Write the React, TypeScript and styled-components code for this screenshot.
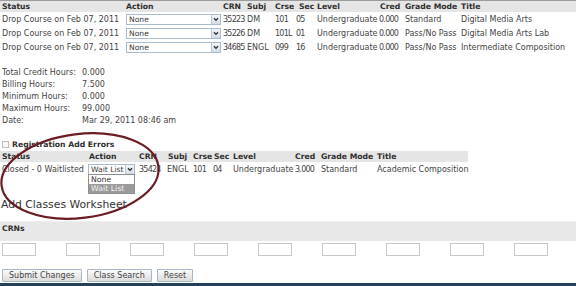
import React from "react";
import styled, { createGlobalStyle } from "styled-components";

const GlobalStyle = createGlobalStyle`
  html, body { margin: 0; padding: 0; background: #fff; }
  body {
    font-family: "DejaVu Sans", Verdana, sans-serif;
    font-size: 8px;
    color: #444;
  }
`;

const Page = styled.div`
  position: relative;
  width: 576px;
  height: 286px;
  overflow: hidden;
  display: flex;
  flex-direction: column;
`;

const COLS1 = "126px 97px 24px 28px 21px 21px 62px 26px 56px 115px";
const COLS2 = "88px 51px 28px 26px 20px 20px 62px 26px 56px 91px";

const HeaderRow = styled.div<{ $cols: string; $width: number; $rule?: boolean; $mt?: number }>`
  display: grid;
  grid-template-columns: ${(p) => p.$cols};
  width: ${(p) => p.$width}px;
  height: 11px;
  margin-top: ${(p) => p.$mt ?? 0}px;
  align-items: center;
  background: #e5e5e5;
  border-top: ${(p) => (p.$rule ? "1px solid #9c9c9c" : "none")};
  font-weight: bold;
  font-size: 7.7px;
  color: #2e2e2e;
`;

const DataRow = styled.div<{ $cols: string; $width: number }>`
  display: grid;
  grid-template-columns: ${(p) => p.$cols};
  width: ${(p) => p.$width}px;
  height: 14px;
  align-items: center;
`;

const Cell = styled.div<{ $pad?: number }>`
  white-space: nowrap;
  padding-left: ${(p) => p.$pad ?? 0}px;
  position: relative;
`;

const Num = styled.span`
  letter-spacing: -0.75px;
`;

const SelectBox = styled.div<{ $w: number }>`
  position: relative;
  box-sizing: border-box;
  width: ${(p) => p.$w}px;
  height: 11px;
  border: 1px solid #a8bccf;
  background: #fff;
  display: flex;
  align-items: center;
  padding-left: 2px;
  font-size: 7.6px;
  color: #3a3a3a;
`;

const SelectText = styled.span`
  flex: 1;
  white-space: nowrap;
`;

const ArrowBtn = styled.span`
  box-sizing: border-box;
  width: 9px;
  height: 9px;
  display: flex;
  align-items: center;
  justify-content: center;
  background: linear-gradient(#f1f4f7, #d5dce5);
  border-left: 1px solid #b9c6d3;
`;

const DropList = styled.div`
  position: absolute;
  left: -1px;
  top: 9px;
  box-sizing: border-box;
  width: 47px;
  border: 1px solid #8e8e8e;
  background: #fff;
  z-index: 2;
`;

const DropItem = styled.div<{ $active?: boolean }>`
  height: 9px;
  line-height: 9px;
  padding-left: 2px;
  font-size: 7.8px;
  background: ${(p) => (p.$active ? "#9b9b9b" : "#fff")};
  color: ${(p) => (p.$active ? "#f2f2f2" : "#333")};
`;

const Summary = styled.div`
  display: grid;
  grid-template-columns: 80px auto;
  grid-auto-rows: 12px;
  align-items: center;
  padding-left: 2px;
  margin-top: 12px;
`;

const CheckRow = styled.div`
  display: flex;
  align-items: center;
  height: 12px;
  margin-top: 12px;
  padding-left: 2px;
  gap: 3px;
`;

const CheckBox = styled.span`
  box-sizing: border-box;
  width: 7px;
  height: 7px;
  border: 1px solid #bdbdbd;
  background: #f8f8f8;
`;

const CheckLabel = styled.span`
  font-weight: bold;
  font-size: 7.7px;
  color: #2e2e2e;
`;

const Heading = styled.div`
  font-size: 10.8px;
  line-height: 13px;
  height: 13px;
  color: #333;
  padding-left: 1px;
  margin-top: 22px;
`;

const Band = styled.div`
  margin-top: 10px;
  border-top: 1px solid #efefef;
  height: 19px;
  box-sizing: content-box;
  background: #e8e8e8;
  font-weight: bold;
  font-size: 7.7px;
  color: #2e2e2e;
  padding-left: 2px;
  line-height: 14px;
`;

const InputRow = styled.div`
  display: flex;
  gap: 30px;
  padding-left: 2px;
  margin-top: 2px;
  height: 13px;
`;

const CrnInput = styled.input`
  box-sizing: border-box;
  width: 34px;
  height: 13px;
  padding: 0;
  margin: 0;
  border: 1px solid #c9c9c9;
  background: #fff;
`;

const ButtonRow = styled.div`
  display: flex;
  gap: 5px;
  padding-left: 2px;
  margin-top: 13px;
  height: 13px;
`;

const Button = styled.button`
  box-sizing: border-box;
  height: 13px;
  padding: 0 6px;
  margin: 0;
  font-family: "DejaVu Sans", Verdana, sans-serif;
  font-size: 8px;
  line-height: 11px;
  color: #444;
  border: 1px solid #a7b7c7;
  border-radius: 1px;
  background: linear-gradient(#fbfbfb, #dcdcdc);
`;

const BottomBar = styled.div`
  margin-top: 1px;
  height: 3px;
  background: #23415a;
`;

const Circle = styled.svg`
  position: absolute;
  left: 0;
  top: 0;
  pointer-events: none;
  z-index: 3;
`;

const Chevron = () => (
  <svg width="6" height="5" viewBox="0 0 6 5">
    <path d="M1 1.2 L3 3.4 L5 1.2" fill="none" stroke="#2b2b2b" strokeWidth="1.3" />
  </svg>
);

const FakeSelect: React.FC<{ w: number; value: string; children?: React.ReactNode }> = ({ w, value, children }) => (
  <SelectBox $w={w}>
    <SelectText>{value}</SelectText>
    <ArrowBtn>
      <Chevron />
    </ArrowBtn>
    {children}
  </SelectBox>
);

const dropped = [
  { crn: "35223", subj: "DM", crse: "101", sec: "05", mode: "Standard", title: "Digital Media Arts" },
  { crn: "35226", subj: "DM", crse: "101L", sec: "01", mode: "Pass/No Pass", title: "Digital Media Arts Lab" },
  { crn: "34685", subj: "ENGL", crse: "099", sec: "16", mode: "Pass/No Pass", title: "Intermediate Composition" },
];

const summary = [
  ["Total Credit Hours:", "0.000"],
  ["Billing Hours:", "7.500"],
  ["Minimum Hours:", "0.000"],
  ["Maximum Hours:", "99.000"],
  ["Date:", "Mar 29, 2011 08:46 am"],
];

export default function App() {
  return (
    <>
      <GlobalStyle />
      <Page>
        <HeaderRow $cols={COLS1} $width={576} $rule>
          <Cell $pad={2}>Status</Cell>
          <Cell>Action</Cell>
          <Cell>CRN</Cell>
          <Cell>Subj</Cell>
          <Cell>Crse</Cell>
          <Cell $pad={3}>Sec</Cell>
          <Cell>Level</Cell>
          <Cell $pad={1}>Cred</Cell>
          <Cell>Grade Mode</Cell>
          <Cell>Title</Cell>
        </HeaderRow>
        {dropped.map((r) => (
          <DataRow key={r.crn} $cols={COLS1} $width={576}>
            <Cell $pad={2}>Drop Course on Feb 07, 2011</Cell>
            <Cell>
              <FakeSelect w={95} value="None" />
            </Cell>
            <Cell><Num>{r.crn}</Num></Cell>
            <Cell>{r.subj}</Cell>
            <Cell><Num>{r.crse}</Num></Cell>
            <Cell><Num>{r.sec}</Num></Cell>
            <Cell>Undergraduate</Cell>
            <Cell><Num>0.000</Num></Cell>
            <Cell>{r.mode}</Cell>
            <Cell>{r.title}</Cell>
          </DataRow>
        ))}

        <Summary>
          {summary.map(([k, v]) => (
            <React.Fragment key={k}>
              <span>{k}</span>
              <span>{v}</span>
            </React.Fragment>
          ))}
        </Summary>

        <CheckRow>
          <CheckBox />
          <CheckLabel>Registration Add Errors</CheckLabel>
        </CheckRow>

        <HeaderRow $cols={COLS2} $width={468} $mt={1}>
          <Cell $pad={2}>Status</Cell>
          <Cell $pad={1}>Action</Cell>
          <Cell>CRN</Cell>
          <Cell $pad={1}>Subj</Cell>
          <Cell>Crse</Cell>
          <Cell $pad={1}>Sec</Cell>
          <Cell>Level</Cell>
          <Cell>Cred</Cell>
          <Cell>Grade Mode</Cell>
          <Cell>Title</Cell>
        </HeaderRow>
        <DataRow $cols={COLS2} $width={468}>
          <Cell $pad={2}>Closed - 0 Waitlisted</Cell>
          <Cell>
            <FakeSelect w={47} value="Wait List">
              <DropList>
                <DropItem>None</DropItem>
                <DropItem $active>Wait List</DropItem>
              </DropList>
            </FakeSelect>
          </Cell>
          <Cell><Num>35424</Num></Cell>
          <Cell>ENGL</Cell>
          <Cell><Num>101</Num></Cell>
          <Cell><Num>04</Num></Cell>
          <Cell>Undergraduate</Cell>
          <Cell><Num>3.000</Num></Cell>
          <Cell>Standard</Cell>
          <Cell>Academic Composition</Cell>
        </DataRow>

        <Heading>Add Classes Worksheet</Heading>

        <Band>CRNs</Band>

        <InputRow>
          {Array.from({ length: 9 }).map((_, i) => (
            <CrnInput key={i} type="text" />
          ))}
        </InputRow>

        <ButtonRow>
          <Button>Submit Changes</Button>
          <Button>Class Search</Button>
          <Button>Reset</Button>
        </ButtonRow>

        <BottomBar />

        <Circle width="576" height="286" viewBox="0 0 576 286">
          <ellipse
            cx="80"
            cy="176"
            rx="79"
            ry="42"
            transform="rotate(-7 80 176)"
            fill="none"
            stroke="#6a1b24"
            strokeWidth="2.2"
          />
        </Circle>
      </Page>
    </>
  );
}
